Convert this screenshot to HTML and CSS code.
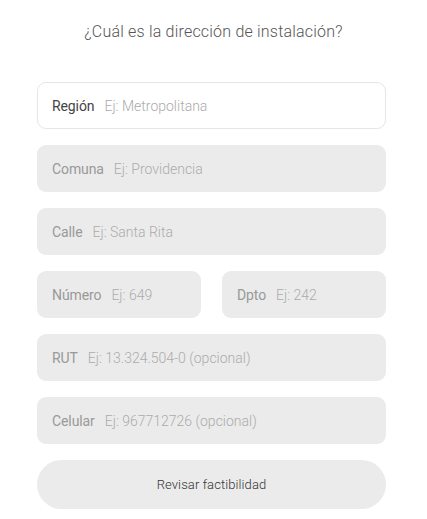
FILE: index.html
```html
<!DOCTYPE html>
<html lang="es">
<head>
<meta charset="utf-8">
<title>Dirección de instalación</title>
<link rel="stylesheet" href="styles.css">
</head>
<body>
<div class="page">
  <h1 class="title">¿Cuál es la dirección de instalación?</h1>
  <form class="form">
    <label class="field field--active"><span class="lbl">Región</span><span class="ph">Ej: Metropolitana</span></label>
    <label class="field"><span class="lbl">Comuna</span><span class="ph">Ej: Providencia</span></label>
    <label class="field"><span class="lbl">Calle</span><span class="ph">Ej: Santa Rita</span></label>
    <div class="row">
      <label class="field"><span class="lbl">Número</span><span class="ph">Ej: 649</span></label>
      <label class="field"><span class="lbl">Dpto</span><span class="ph">Ej: 242</span></label>
    </div>
    <label class="field"><span class="lbl">RUT</span><span class="ph">Ej: 13.324.504-0 (opcional)</span></label>
    <label class="field"><span class="lbl">Celular</span><span class="ph">Ej: 967712726 (opcional)</span></label>
    <button type="button" class="btn">Revisar factibilidad</button>
  </form>
</div>
</body>
</html>
```
FILE: styles.css
```css
html, body {
  margin: 0;
  padding: 0;
  background: #ffffff;
}
body {
  font-family: "Roboto", "Liberation Sans", sans-serif;
}
.page {
  width: 427px;
  padding-top: 20px;
  box-sizing: border-box;
}
.title {
  margin: 0;
  text-align: center;
  font-size: 16px;
  font-weight: 300;
  letter-spacing: 0.2px;
  color: #555555;
  line-height: 24px;
}
.form {
  margin: 38px 41px 0 37px;
  display: flex;
  flex-direction: column;
  gap: 16px;
}
.field {
  height: 47px;
  box-sizing: border-box;
  background: #ebebeb;
  border-radius: 9px;
  display: flex;
  align-items: center;
  padding-left: 15px;
  font-size: 14px;
}
.field--active {
  background: #ffffff;
  border: 1px solid #e6e6e6;
  padding-left: 14px;
}
.lbl {
  color: #999999;
  margin-right: 10px;
  letter-spacing: -0.1px;
}
.field--active .lbl {
  color: #444444;
}
.ph {
  color: #ababab;
  font-weight: 300;
}
.row {
  display: grid;
  grid-template-columns: 1fr 1fr;
  gap: 21px;
}
.btn {
  height: 49px;
  border: none;
  border-radius: 25px;
  background: #ebebeb;
  font-family: inherit;
  font-size: 13px;
  font-weight: 300;
  letter-spacing: 0.1px;
  color: #333333;
  cursor: pointer;
}
```
